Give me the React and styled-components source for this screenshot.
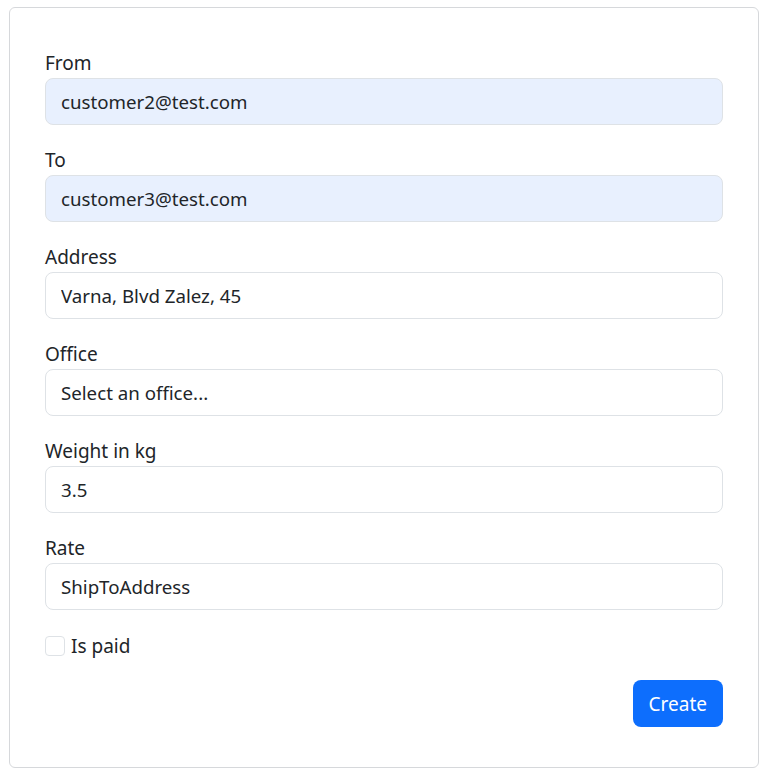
import styled, { createGlobalStyle } from 'styled-components'

const GlobalStyle = createGlobalStyle`
  body {
    margin: 0;
    font-family: "Noto Sans", "Segoe UI", Roboto, sans-serif;
    color: #212529;
    background: #fff;
  }
  * { box-sizing: border-box; }
`

const fields = [
  { label: 'From', value: 'customer2@test.com', autofill: true },
  { label: 'To', value: 'customer3@test.com', autofill: true },
  { label: 'Address', value: 'Varna, Blvd Zalez, 45' },
  { label: 'Office', value: 'Select an office...' },
  { label: 'Weight in kg', value: '3.5' },
  { label: 'Rate', value: 'ShipToAddress' }
]

export default function App() {
  return (
    <Page>
      <GlobalStyle />
      <Card>
        {fields.map((f) => (
          <Group key={f.label}>
            <Label>{f.label}</Label>
            <Input $autofill={f.autofill} defaultValue={f.value} readOnly />
          </Group>
        ))}
        <CheckRow>
          <Check type="checkbox" />
          <CheckLabel>Is paid</CheckLabel>
        </CheckRow>
        <Actions>
          <Button>Create</Button>
        </Actions>
      </Card>
    </Page>
  )
}

const Page = styled.div`
  padding: 7px 8px 9px 9px;
`

const Card = styled.div`
  width: 750px;
  border: 1px solid #d6d8db;
  border-radius: 6px;
  padding: 40px 35px 40px 35px;
  display: flex;
  flex-direction: column;
`

const Group = styled.div`
  display: flex;
  flex-direction: column;
  margin-bottom: 20px;
`

const Label = styled.label`
  font-size: 19px;
  line-height: 30px;
`

const Input = styled.input`
  height: 47px;
  width: 100%;
  padding: 0 15px;
  font-family: inherit;
  font-size: 18.7px;
  color: #212529;
  background: ${(p) => (p.$autofill ? '#e8f0fe' : '#fff')};
  border: 1px solid #dee2e6;
  border-radius: 8px;
  outline: none;
`

const CheckRow = styled.div`
  display: flex;
  align-items: center;
  gap: 6px;
  height: 30px;
  margin-top: 1px;
`

const Check = styled.input`
  appearance: none;
  margin: 0;
  width: 20px;
  height: 20px;
  border: 1px solid #dee2e6;
  border-radius: 4px;
  background: #fff;
`

const CheckLabel = styled.span`
  font-size: 19px;
`

const Actions = styled.div`
  display: flex;
  justify-content: flex-end;
  margin-top: 19px;
`

const Button = styled.button`
  height: 47px;
  padding: 0 16px;
  font-family: inherit;
  font-size: 19px;
  color: #fff;
  background: #0d6efd;
  border: none;
  border-radius: 8px;
`
